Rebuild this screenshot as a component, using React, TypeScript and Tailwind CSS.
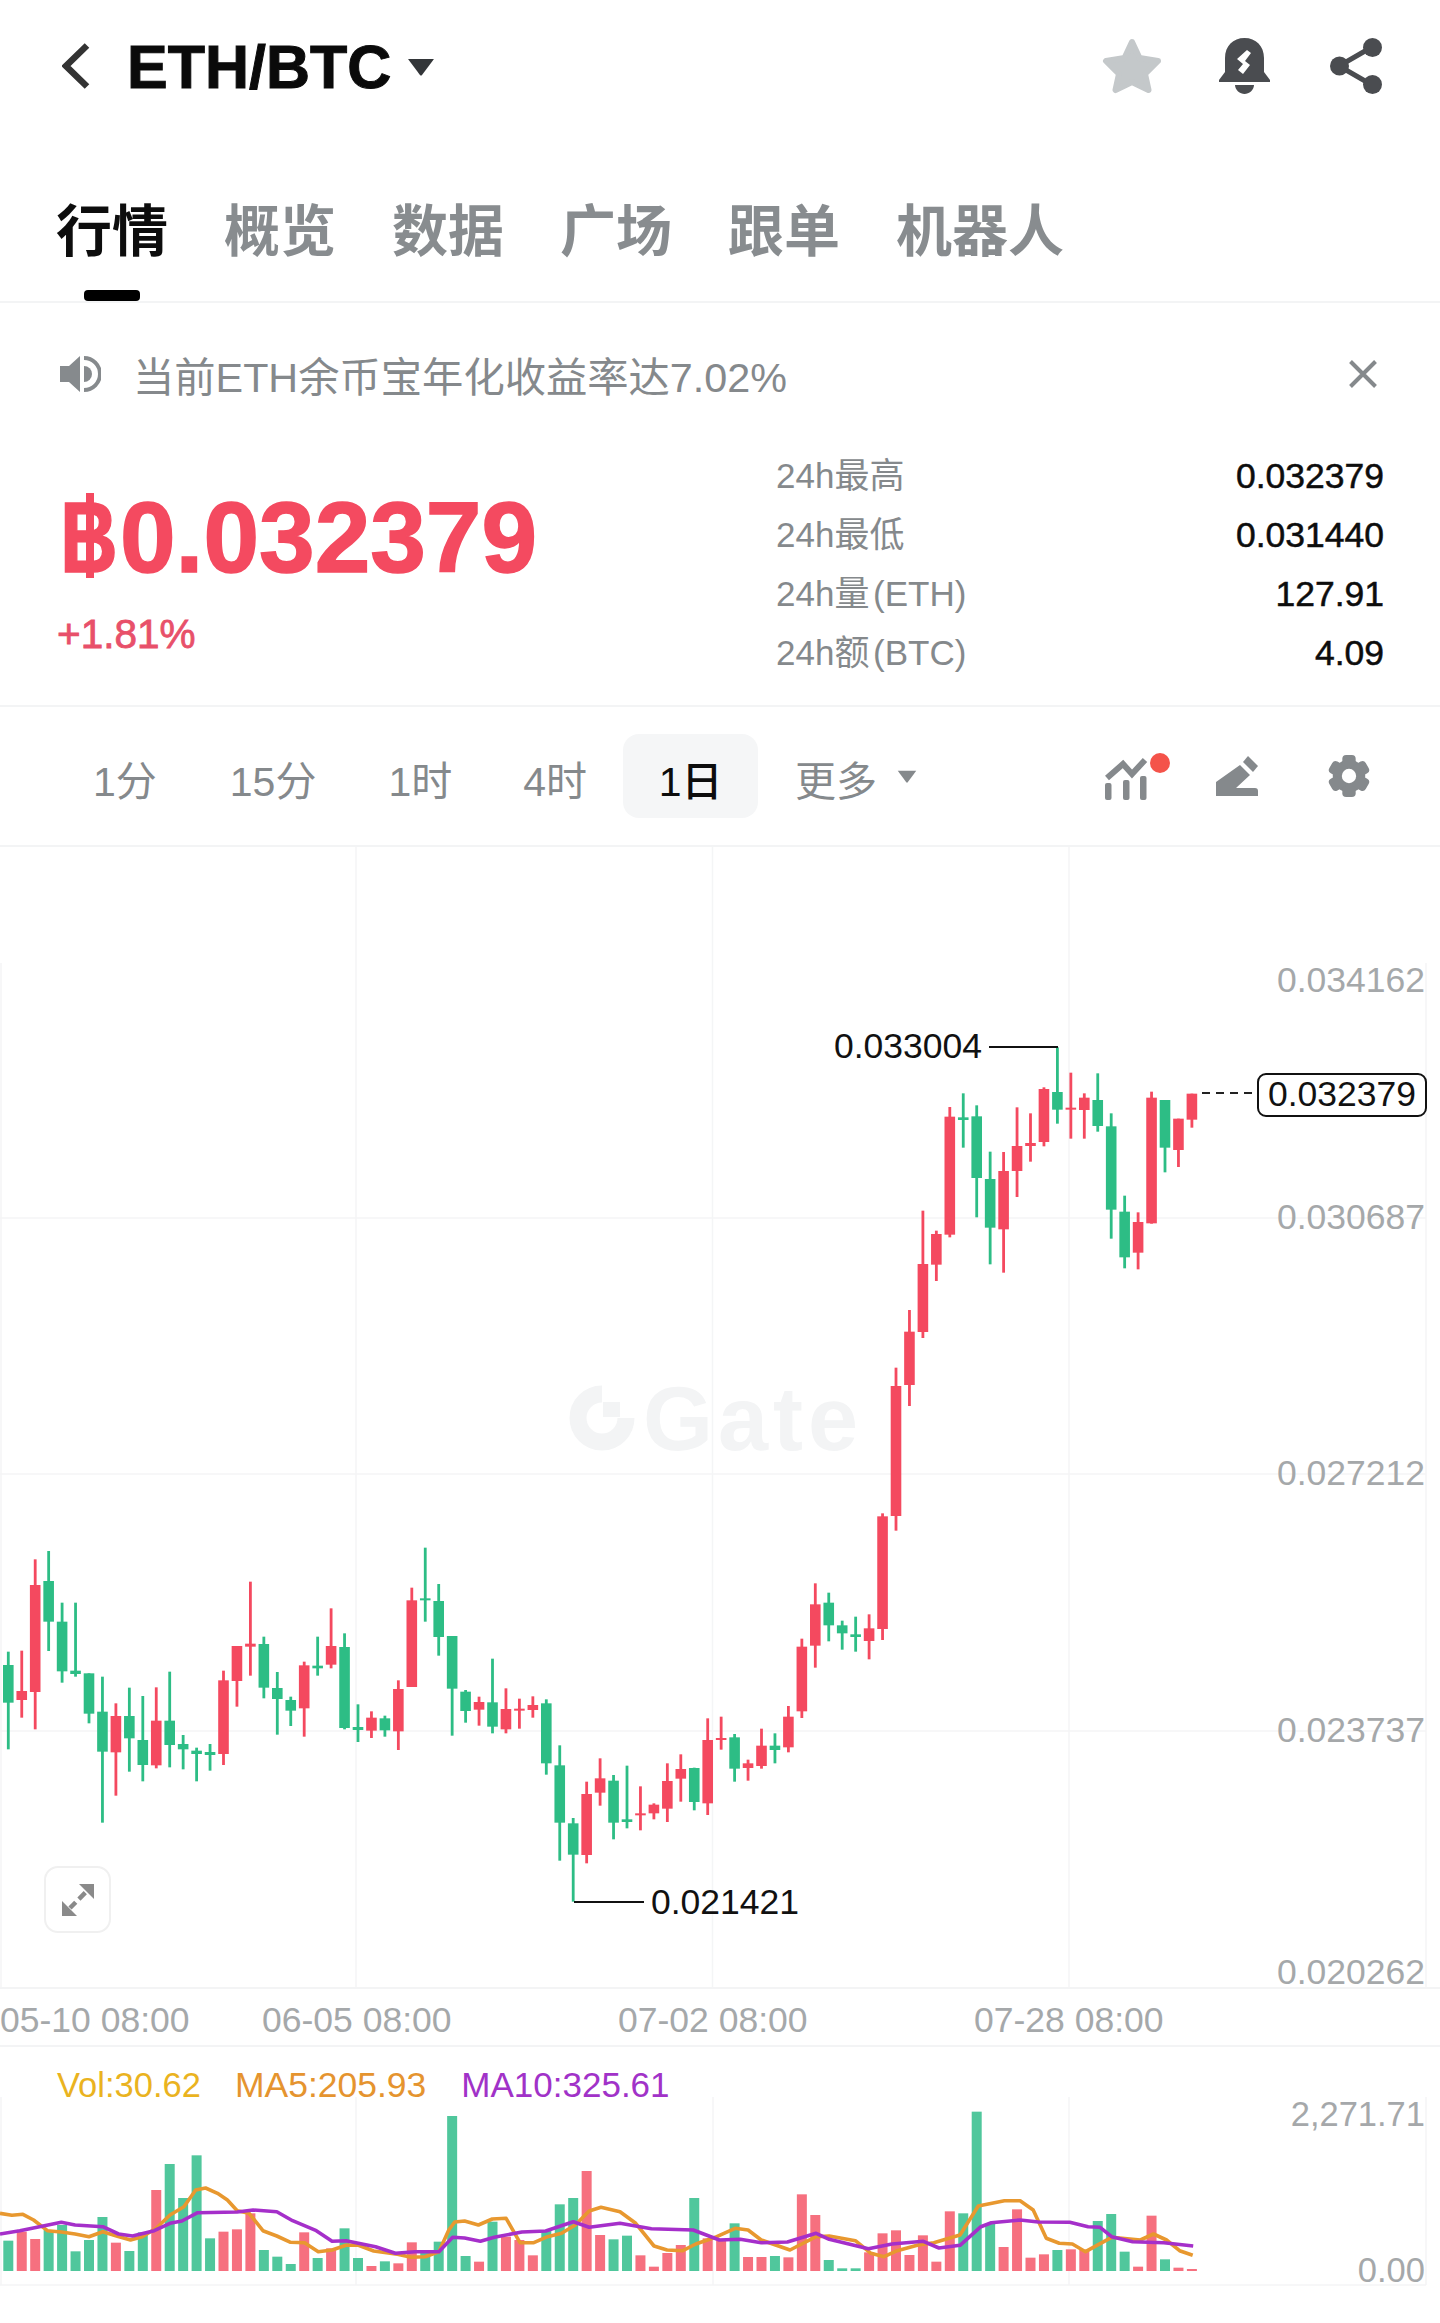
const RED = "#f4495f";
const GREEN = "#2dbd85";

const candleX = (i: number) => 8.3 + i * 13.45;

// wick top, body top, body bottom, wick bottom, 1 = up (red)
type Raw = [number, number, number, number, number];

const fromZoom = (list: Raw[], y0: number, div = 3): Raw[] =>
  list.map(([a, b, c, d, up]) => [y0 + a / div, y0 + b / div, y0 + c / div, y0 + d / div, up]);

const candles: Raw[] = [
  ...fromZoom(
    [
      [455, 495, 608, 748, 0], [452, 573, 600, 653, 1], [178, 255, 576, 688, 1], [153, 243, 365, 453, 0],
      [308, 365, 514, 548, 0], [308, 512, 522, 530, 0], [520, 520, 641, 670, 0], [530, 635, 755, 968, 0],
      [610, 648, 757, 887, 1], [563, 648, 715, 815, 0], [588, 720, 795, 844, 0], [562, 662, 796, 805, 1],
      [515, 662, 735, 802, 0], [705, 732, 748, 808, 0], [743, 752, 762, 844, 0], [732, 756, 765, 812, 0],
      [512, 541, 762, 795, 1], [438, 438, 543, 620, 1], [245, 431, 440, 527, 1], [410, 432, 563, 595, 0],
      [516, 564, 597, 704, 0], [590, 600, 632, 678, 0], [485, 496, 625, 710, 1], [410, 497, 505, 527, 0],
      [325, 438, 494, 505, 1], [400, 441, 684, 688, 0], [613, 681, 690, 726, 0], [634, 653, 692, 714, 1],
      [647, 655, 691, 710, 0], [541, 567, 694, 750, 1], [263, 301, 561, 561, 1],
      [143, 295, 301, 365, 0], [252, 303, 411, 467, 0], [408, 408, 566, 707, 0], [570, 575, 633, 668, 0],
      [590, 606, 629, 677, 1], [476, 607, 680, 700, 0], [565, 627, 688, 700, 1], [596, 626, 632, 686, 1],
      [589, 615, 630, 653, 1], [598, 610, 790, 824, 0], [736, 796, 968, 1082, 0], [954, 970, 1064, 1205, 0],
      [845, 882, 1065, 1090, 1], [775, 835, 878, 917, 1], [825, 842, 968, 1018, 0], [797, 958, 966, 985, 0],
      [859, 940, 946, 991, 1], [910, 914, 940, 958, 1], [790, 843, 926, 966, 1], [763, 807, 836, 905, 1],
      [803, 804, 906, 931, 0], [655, 720, 910, 945, 1], [650, 714, 720, 749, 1], [702, 712, 806, 845, 0],
      [779, 790, 804, 842, 1], [686, 737, 798, 806, 1], [700, 737, 750, 790, 0], [618, 650, 742, 757, 1],
      [416, 440, 634, 654, 1], [250, 313, 437, 503, 1], [278, 308, 376, 424, 0], [362, 376, 400, 449, 0],
      [350, 403, 411, 455, 0], [343, 385, 423, 478, 1], [40, 49, 387, 420, 1],
    ],
    1500
  ),
  ...fromZoom([[203, 258, 648, 692, 1], [30, 95, 255, 318, 1]], 1300),
  ...fromZoom(
    [
      [752, 912, 1116, 1134, 1], [812, 822, 914, 963, 1], [441, 470, 824, 832, 1], [400, 472, 480, 563, 0],
      [436, 469, 654, 772, 0], [575, 657, 803, 913, 0], [576, 633, 808, 938, 1], [442, 558, 633, 711, 1],
      [460, 549, 558, 605, 1], [382, 387, 546, 559, 1], [262, 396, 449, 491, 0], [338, 443, 449, 536, 1],
      [400, 413, 450, 536, 1], [340, 420, 498, 515, 0], [460, 499, 749, 836, 0], [707, 755, 892, 925, 0],
      [757, 786, 878, 928, 1], [395, 413, 790, 791, 1], [420, 420, 563, 637, 0], [476, 476, 570, 621, 1],
      [401, 401, 479, 503, 1],
    ],
    960
  ),
];

// bar tops, in crop pixels measured from 2020 at 3x
const barTops = [
  662, 635, 657, 630, 615, 694, 660, 591, 668, 693, 637, 510, 432, 534, 406, 655, 635, 628, 580, 690, 710, 732, 637, 714,
  685, 625, 714, 738, 724, 730, 667, 690, 665, 288, 708, 725, 605, 650, 660, 706, 630, 553, 534, 453, 645, 658, 647, 706,
  740, 699, 675, 534, 655, 662, 610, 711, 711, 708, 712, 523, 585, 720, 745, 745, 697, 640, 631, 705, 646, 725, 574, 580,
  275, 612, 681, 568, 713, 703, 690, 688, 690, 603, 582, 695, 740, 587, 718, 743, 747,
];

const toLine = (left: number[][], right: number[][]) =>
  [
    ...left.map(([x, y]) => [x / 2.529, 2020 + y / 3]),
    ...right.map(([x, y]) => [620 + x / 1.912, 2020 + y / 3]),
  ]
    .map(([x, y]) => `${x.toFixed(1)},${y.toFixed(1)}`)
    .join(" ");

const ma5 = toLine(
  [
    [0, 580], [30, 586], [58, 583], [85, 600], [120, 632], [155, 636], [190, 642], [225, 650], [260, 635], [295, 648],
    [330, 660], [360, 650], [395, 625], [430, 585], [465, 560], [495, 510], [520, 504], [550, 520], [575, 540], [600, 572],
    [630, 580], [665, 632], [700, 648], [735, 667], [770, 668], [805, 695], [840, 690], [875, 676], [905, 675], [945, 693],
    [1005, 703], [1040, 712], [1075, 710], [1110, 695], [1135, 630], [1150, 606], [1175, 603], [1210, 615], [1245, 597],
    [1280, 595], [1315, 668], [1350, 668], [1385, 650], [1420, 640], [1455, 615], [1490, 573], [1520, 562],
  ],
  [
    [0, 575], [30, 610], [65, 678], [90, 690], [120, 692], [145, 672], [185, 650], [220, 625], [245, 630], [270, 660],
    [325, 690], [375, 650], [400, 648], [450, 662], [480, 700], [505, 710], [530, 692], [570, 675], [600, 668], [650, 645],
    [685, 558], [735, 542], [765, 542], [790, 570], [815, 655], [840, 670], [865, 672], [890, 695], [940, 652], [995, 660],
    [1020, 642], [1045, 660], [1070, 692], [1095, 706],
  ]
);

const ma10 = toLine(
  [
    [0, 642], [50, 632], [100, 620], [155, 607], [190, 615], [260, 620], [300, 642], [335, 648], [390, 632], [430, 610],
    [460, 603], [500, 578], [600, 576], [640, 570], [700, 575], [740, 602], [800, 632], [840, 664], [875, 662], [950, 680],
    [1000, 700], [1050, 695], [1110, 695], [1145, 652], [1175, 654], [1215, 664], [1250, 652], [1320, 636], [1380, 633],
    [1450, 605], [1490, 622],
  ],
  [
    [0, 610], [60, 626], [140, 630], [190, 660], [230, 658], [270, 668], [320, 666], [375, 640], [400, 658], [475, 686],
    [520, 672], [580, 664], [610, 684], [650, 676], [690, 620], [710, 608], [765, 600], [800, 606], [860, 607], [895, 620],
    [918, 622], [940, 650], [980, 665], [1040, 668], [1096, 678],
  ]
);

const tabs = ["概览", "数据", "广场", "跟单", "机器人"];

const stats = [
  ["24h最高", "0.032379"],
  ["24h最低", "0.031440"],
  ["24h量 (ETH)", "127.91"],
  ["24h额 (BTC)", "4.09"],
];

function CandleChart() {
  return (
    <svg viewBox="0 847 1440 1140" className="absolute left-0 top-0 h-[1140px] w-[1440px]">
      <g stroke="#f4f5f6" strokeWidth="1.5">
        <line x1="356" y1="847" x2="356" y2="1987" />
        <line x1="712.5" y1="847" x2="712.5" y2="1987" />
        <line x1="1069" y1="847" x2="1069" y2="1987" />
        <line x1="1" y1="963" x2="1" y2="1987" />
        <line x1="1426" y1="963" x2="1426" y2="1987" />
        <line x1="0" y1="1218" x2="1426" y2="1218" />
        <line x1="0" y1="1474" x2="1426" y2="1474" />
        <line x1="0" y1="1731" x2="1426" y2="1731" />
      </g>
      <path d="M602 1394 A24 24 0 1 0 626 1418" fill="none" stroke="#f3f4f5" strokeWidth="17" />
      <rect x="603" y="1402" width="17" height="15" fill="#f3f4f5" />
      <line x1="822" y1="1423" x2="843" y2="1423" stroke="#dcdee0" strokeWidth="1" />
      {candles.map(([wt, bt, bb, wb, up], i) => {
        const x = candleX(i);
        const color = up ? RED : GREEN;
        return (
          <g key={i} fill={color}>
            <rect x={x - 1.4} y={wt} width="2.8" height={wb - wt} />
            <rect x={x - 5.3} y={bt} width="10.6" height={Math.max(bb - bt, 2)} />
          </g>
        );
      })}
      <polyline points="989,1047 1058,1047" fill="none" stroke="#111" strokeWidth="2" />
      <polyline points="574,1902 644,1902" fill="none" stroke="#111" strokeWidth="2" />
      <line x1="1202" y1="1093" x2="1252" y2="1093" stroke="#222" strokeWidth="2" strokeDasharray="8 6" />
    </svg>
  );
}

function VolumeChart() {
  return (
    <svg viewBox="0 2097 1440 226" className="h-[226px] w-[1440px]">
      <g stroke="#f4f5f6" strokeWidth="1.5">
        <line x1="356" y1="2097" x2="356" y2="2285" />
        <line x1="713" y1="2097" x2="713" y2="2285" />
        <line x1="1069" y1="2097" x2="1069" y2="2285" />
        <line x1="1" y1="2097" x2="1" y2="2285" />
        <line x1="1426" y1="2097" x2="1426" y2="2285" />
        <line x1="0" y1="2285" x2="1426" y2="2285" />
      </g>
      {barTops.map((top, i) => {
        const y = 2020 + top / 3;
        return (
          <rect
            key={i}
            x={candleX(i) - 5}
            y={y}
            width="10"
            height={2271 - y}
            fill={candles[i][4] ? "#f6707f" : "#50c79c"}
          />
        );
      })}
      <polyline points={ma5} fill="none" stroke="#e8982f" strokeWidth="3.6" strokeLinejoin="round" />
      <polyline points={ma10} fill="none" stroke="#a52fca" strokeWidth="3.6" strokeLinejoin="round" />
    </svg>
  );
}

function Caret({ className }: { className: string }) {
  return (
    <svg viewBox="0 0 27 18" preserveAspectRatio="none" className={className}>
      <path d="M1 1 H26 L14.5 17 Q13.5 18 12.5 17 Z" fill="currentColor" />
    </svg>
  );
}

export default function App() {
  return (
    <div className="h-[2323px] w-[1440px] overflow-hidden bg-white font-['Liberation_Sans','Noto_Sans_CJK_SC',sans-serif]">
      {/* top bar */}
      <header className="flex h-[132px] items-center pl-[62px] pr-[58px]">
        <svg viewBox="0 0 28 46" className="h-[46px] w-[28px]">
          <polyline points="25,2.5 4,23 25,43.5" fill="none" stroke="#333" strokeWidth="6.5" />
        </svg>
        <span className="ml-[37px] mt-[2px] text-[61px] leading-[66px] font-bold text-[#0a0a0a] [-webkit-text-stroke:1px_#0a0a0a]">
          ETH/BTC
        </span>
        <Caret className="ml-[16px] mt-[2px] h-[18px] w-[28px] text-[#333639]" />
        <svg viewBox="0 0 60 56" className="ml-auto h-[56px] w-[60px]">
          <polygon
            points="30,4 37.5,20 56,23 43,36 46.5,52 30,44 13.5,52 17,36 4,23 22.5,20"
            fill="#c4c8ca"
            stroke="#c4c8ca"
            strokeWidth="6"
            strokeLinejoin="round"
          />
        </svg>
        <svg viewBox="0 0 51 56" className="ml-[57px] h-[56px] w-[51px]">
          <path d="M25.5 0 C14 0 6 8 6 20 V34 L0 42 V44 H51 V42 L45 34 V20 C45 8 37 0 25.5 0Z" fill="#4a4c50" />
          <path d="M16 47 H35 C35 52 30 56 25.5 56 C21 56 16 52 16 47Z" fill="#4a4c50" />
          <polygon points="28,12 32,15 26,23 31,27 24,36 19,32 24,26 18,21" fill="#fff" />
        </svg>
        <svg viewBox="0 0 52 56" className="ml-[60px] h-[56px] w-[52px]">
          <polyline points="42,9 9,28 42,47" fill="none" stroke="#4a4c50" strokeWidth="5" />
          <circle cx="42.5" cy="9.5" r="9.5" fill="#4a4c50" />
          <circle cx="9.5" cy="28" r="9.5" fill="#4a4c50" />
          <circle cx="42.5" cy="46.5" r="9.5" fill="#4a4c50" />
        </svg>
      </header>

      {/* tabs */}
      <nav className="flex h-[171px] gap-[56px] border-b-2 border-[#f3f4f5] pl-[56px] pt-[72px] text-[56px] leading-[56px] font-semibold">
        <div className="flex flex-col items-center">
          <span className="text-[#0d0d0d]">行情</span>
          <span className="mt-[30px] h-[11px] w-[56px] rounded-[4px] bg-black" />
        </div>
        {tabs.map((t) => (
          <span key={t} className="text-[#888c8f]">
            {t}
          </span>
        ))}
      </nav>

      {/* notice */}
      <div className="flex h-[140px] items-start pl-[60px] pr-[63px] pt-[52px]">
        <svg viewBox="0 0 41 36" className="mt-[1px] h-[36px] w-[41px]">
          <path d="M0 10 H9 L20 0 V36 L9 26 H0Z" fill="#868a8d" />
          <path d="M24 10 A8 8 0 0 1 24 26Z" fill="#868a8d" />
          <path d="M24 2 A16 16 0 0 1 24 34" fill="none" stroke="#868a8d" strokeWidth="4" />
        </svg>
        <span className="ml-[32px] text-[41.3px] leading-[46px] text-[#85898c]">当前ETH余币宝年化收益率达7.02%</span>
        <svg viewBox="0 0 28 28" className="ml-auto mt-[5px] h-[28px] w-[28px]">
          <path d="M1.5 1.5 L26.5 26.5 M26.5 1.5 L1.5 26.5" stroke="#85898c" strokeWidth="4" />
        </svg>
      </div>

      {/* price + 24h stats */}
      <section className="flex h-[264px] border-b-2 border-[#f3f4f5]">
        <div className="ml-[58px] mt-[46px] w-[718px]">
          <div className="flex text-[100px] leading-[96px] font-bold text-[#f44a60] [-webkit-text-stroke:1.5px_#f44a60]">
            <span className="relative w-[62px] pl-[2px]">
              <span className="inline-block origin-left scale-x-[0.8]">B</span>
              <span className="absolute left-[28px] top-[4px] h-[85px] w-[8px] bg-[#f44a60]" />
            </span>
            <span>0.032379</span>
          </div>
          <div className="-ml-[1px] mt-[29px] text-[40.5px] leading-[40px] text-[#e8506a] [-webkit-text-stroke:0.8px_#e8506a]">
            +1.81%
          </div>
        </div>
        <div className="mt-[4px] w-[608px]">
          {stats.map(([k, v]) => (
            <div key={k} className="flex h-[59px] items-center justify-between text-[35px]">
              <span className="text-[#85898c] [word-spacing:-6px]">{k}</span>
              <span className="text-[35.5px] text-[#0d0d0d] [-webkit-text-stroke:0.5px_#0d0d0d]">{v}</span>
            </div>
          ))}
        </div>
      </section>

      {/* periods + tools */}
      <div className="flex h-[140px] items-center border-b-2 border-[#f3f4f5] text-[41px] text-[#85898c]">
        <span className="ml-[93px] pt-[14px]">1分</span>
        <span className="ml-[73px] pt-[14px]">15分</span>
        <span className="ml-[72px] pt-[14px]">1时</span>
        <span className="ml-[71px] pt-[14px]">4时</span>
        <span className="ml-[36px] flex h-[84px] w-[135px] items-center justify-center rounded-[16px] bg-[#f5f6f7] pt-[14px] font-medium text-[#0d0d0d]">
          1日
        </span>
        <span className="ml-[37px] pt-[14px]">更多</span>
        <Caret className="ml-[20px] h-[13px] w-[20px] text-[#85898c]" />
        <div className="ml-auto mr-[70px] flex items-center">
          <svg viewBox="0 0 66 48" className="h-[48px] w-[66px]">
            <polyline points="2,26 18,12 27,22 40,8" fill="none" stroke="#85898c" strokeWidth="6" />
            <rect x="0" y="31" width="6.5" height="17" rx="2" fill="#85898c" />
            <rect x="18" y="28" width="6.5" height="20" rx="2" fill="#85898c" />
            <rect x="35" y="24" width="6.5" height="24" rx="2" fill="#85898c" />
            <circle cx="55" cy="11" r="10" fill="#f4534a" />
          </svg>
          <svg viewBox="0 0 42 40" className="ml-[45px] h-[40px] w-[42px]">
            <polygon points="32,0 42,10 37,16 27,6" fill="#85898c" />
            <path d="M0 40 V26 L24 9 L34 19 L20 32 H39 Q42 32 42 35 V40Z" fill="#85898c" />
          </svg>
          <svg viewBox="0 0 44 44" className="ml-[70px] h-[44px] w-[42px]">
            <g fill="#85898c">
              <circle cx="22" cy="22" r="17" />
              <rect x="15" y="0" width="14" height="44" rx="4" />
              <rect x="15" y="0" width="14" height="44" rx="4" transform="rotate(60 22 22)" />
              <rect x="15" y="0" width="14" height="44" rx="4" transform="rotate(120 22 22)" />
            </g>
            <circle cx="22" cy="22" r="7.5" fill="#fff" />
          </svg>
        </div>
      </div>

      {/* candles */}
      <section className="relative h-[1142px] border-b-2 border-[#f3f4f5]">
        <CandleChart />
        <span className="absolute left-[643px] top-[522px] text-[90px] leading-[100px] font-bold tracking-[5px] text-[#f3f4f5]">
          Gate
        </span>
        <span className="absolute right-[15px] top-[113px] text-[35.5px] leading-[40px] text-[#a5a8aa]">0.034162</span>
        <span className="absolute right-[15px] top-[350px] text-[35.5px] leading-[40px] text-[#a5a8aa]">0.030687</span>
        <span className="absolute right-[15px] top-[606px] text-[35.5px] leading-[40px] text-[#a5a8aa]">0.027212</span>
        <span className="absolute right-[15px] top-[863px] text-[35.5px] leading-[40px] text-[#a5a8aa]">0.023737</span>
        <span className="absolute right-[15px] top-[1105px] text-[35.5px] leading-[40px] text-[#a5a8aa]">0.020262</span>
        <span className="absolute left-[834px] top-[179px] text-[35.5px] leading-[40px] text-[#111]">0.033004</span>
        <span className="absolute left-[651px] top-[1035px] text-[35.5px] leading-[40px] text-[#111]">0.021421</span>
        <span className="absolute left-[1257px] top-[226px] flex h-[44px] w-[170px] items-center justify-center rounded-[9px] border-2 border-[#111] bg-white text-[35.5px] text-[#111]">
          0.032379
        </span>
        <span className="absolute left-[44px] top-[1019px] flex h-[67px] w-[67px] items-center justify-center rounded-[14px] border-2 border-[#f0f0f0] bg-white">
          <svg viewBox="0 0 32 32" className="h-[32px] w-[32px]">
            <g fill="#8a8a8a">
              <polygon points="17,0 32,0 32,15" />
              <polygon points="0,17 0,32 15,32" />
            </g>
            <line x1="24" y1="8" x2="8" y2="24" stroke="#8a8a8a" strokeWidth="4.5" strokeDasharray="9 4.5" strokeDashoffset="-1" />
          </svg>
        </span>
      </section>

      {/* time axis */}
      <div className="flex h-[58px] items-center border-b-2 border-[#f3f4f5] pt-[8px] text-[35.5px] text-[#a5a8aa]">
        <span className="w-[262px]">05-10 08:00</span>
        <span className="w-[356px]">06-05 08:00</span>
        <span className="w-[356px]">07-02 08:00</span>
        <span>07-28 08:00</span>
      </div>

      {/* volume */}
      <section className="relative">
        <div className="flex h-[50px] items-start pl-[57px] pt-[18px] text-[35.5px] leading-[40px]">
          <span className="text-[34.5px] text-[#eab31f]">Vol:30.62</span>
          <span className="ml-[34px] text-[#e5942f]">MA5:205.93</span>
          <span className="ml-[35px] text-[35px] text-[#a132c8]">MA10:325.61</span>
        </div>
        <VolumeChart />
        <span className="absolute right-[15px] top-[47px] text-[34.5px] leading-[40px] text-[#a5a8aa]">2,271.71</span>
        <span className="absolute right-[15px] top-[203px] text-[34.5px] leading-[40px] text-[#a5a8aa]">0.00</span>
      </section>
    </div>
  );
}
